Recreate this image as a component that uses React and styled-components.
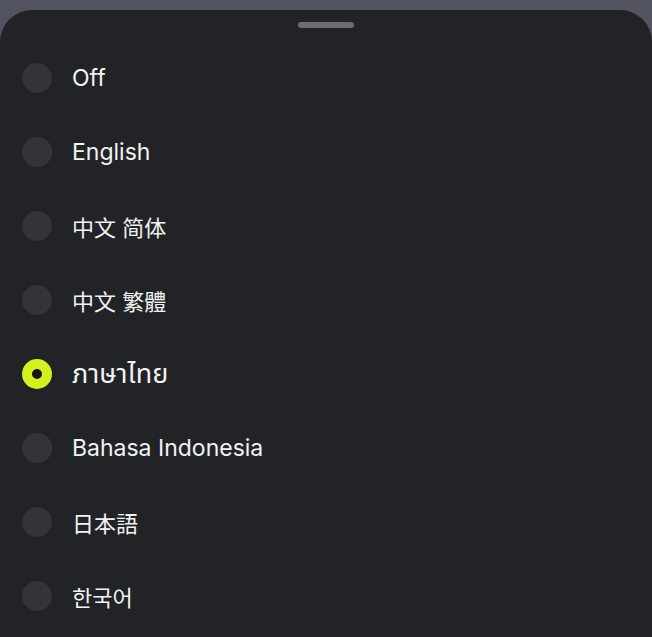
import React, { useState } from "react";
import styled, { createGlobalStyle } from "styled-components";

const languages = [
  { id: "off", label: "Off" },
  { id: "en", label: "English" },
  { id: "zh-hans", label: "中文 简体", cjk: "Noto Sans CJK SC" },
  { id: "zh-hant", label: "中文 繁體", cjk: "Noto Sans CJK TC" },
  { id: "th", label: "ภาษาไทย", thai: true },
  { id: "id", label: "Bahasa Indonesia" },
  { id: "ja", label: "日本語", cjk: "Noto Sans CJK JP" },
  { id: "ko", label: "한국어", cjk: "Noto Sans CJK KR" },
];

const GlobalStyle = createGlobalStyle`
  html, body {
    margin: 0;
    padding: 0;
    background: #52555f;
    height: 100%;
    overflow: hidden;
  }
  #root {
    height: 100%;
  }
`;

export default function App() {
  const [selected, setSelected] = useState("th");

  return (
    <>
      <GlobalStyle />
      <Sheet>
        <Handle />
        <List>
          {languages.map((lang) => (
            <Row key={lang.id} onClick={() => setSelected(lang.id)}>
              <Radio $active={selected === lang.id} />
              <Label $cjk={lang.cjk} $thai={lang.thai}>
                {lang.label}
              </Label>
            </Row>
          ))}
        </List>
      </Sheet>
    </>
  );
}

const Sheet = styled.div`
  margin-top: 10px;
  height: calc(100% - 10px);
  background: #222327;
  border-radius: 32px 32px 0 0;
  display: flex;
  flex-direction: column;
  padding-top: 12px;
  box-sizing: border-box;
`;

const Handle = styled.div`
  align-self: center;
  width: 56px;
  height: 6px;
  border-radius: 3px;
  background: #6b6d76;
`;

const List = styled.div`
  margin-top: 13px;
  display: flex;
  flex-direction: column;
`;

const Row = styled.div`
  height: 74px;
  display: flex;
  align-items: center;
  gap: 20px;
  padding-left: 22px;
  cursor: pointer;
`;

const Radio = styled.span`
  width: 30px;
  height: 30px;
  border-radius: 50%;
  box-sizing: border-box;
  flex-shrink: 0;
  background: ${(p) => (p.$active ? "#151619" : "#333439")};
  border: ${(p) => (p.$active ? "10px solid #d3f11d" : "none")};
`;

const Label = styled.span`
  color: #f2f2f3;
  font-size: ${(p) => (p.$thai ? "27px" : p.$cjk ? "22px" : "23px")};
  font-family: Inter, ${(p) => (p.$cjk ? `"${p.$cjk}",` : "")} "Noto Sans",
    "Noto Sans Thai", sans-serif;
`;
